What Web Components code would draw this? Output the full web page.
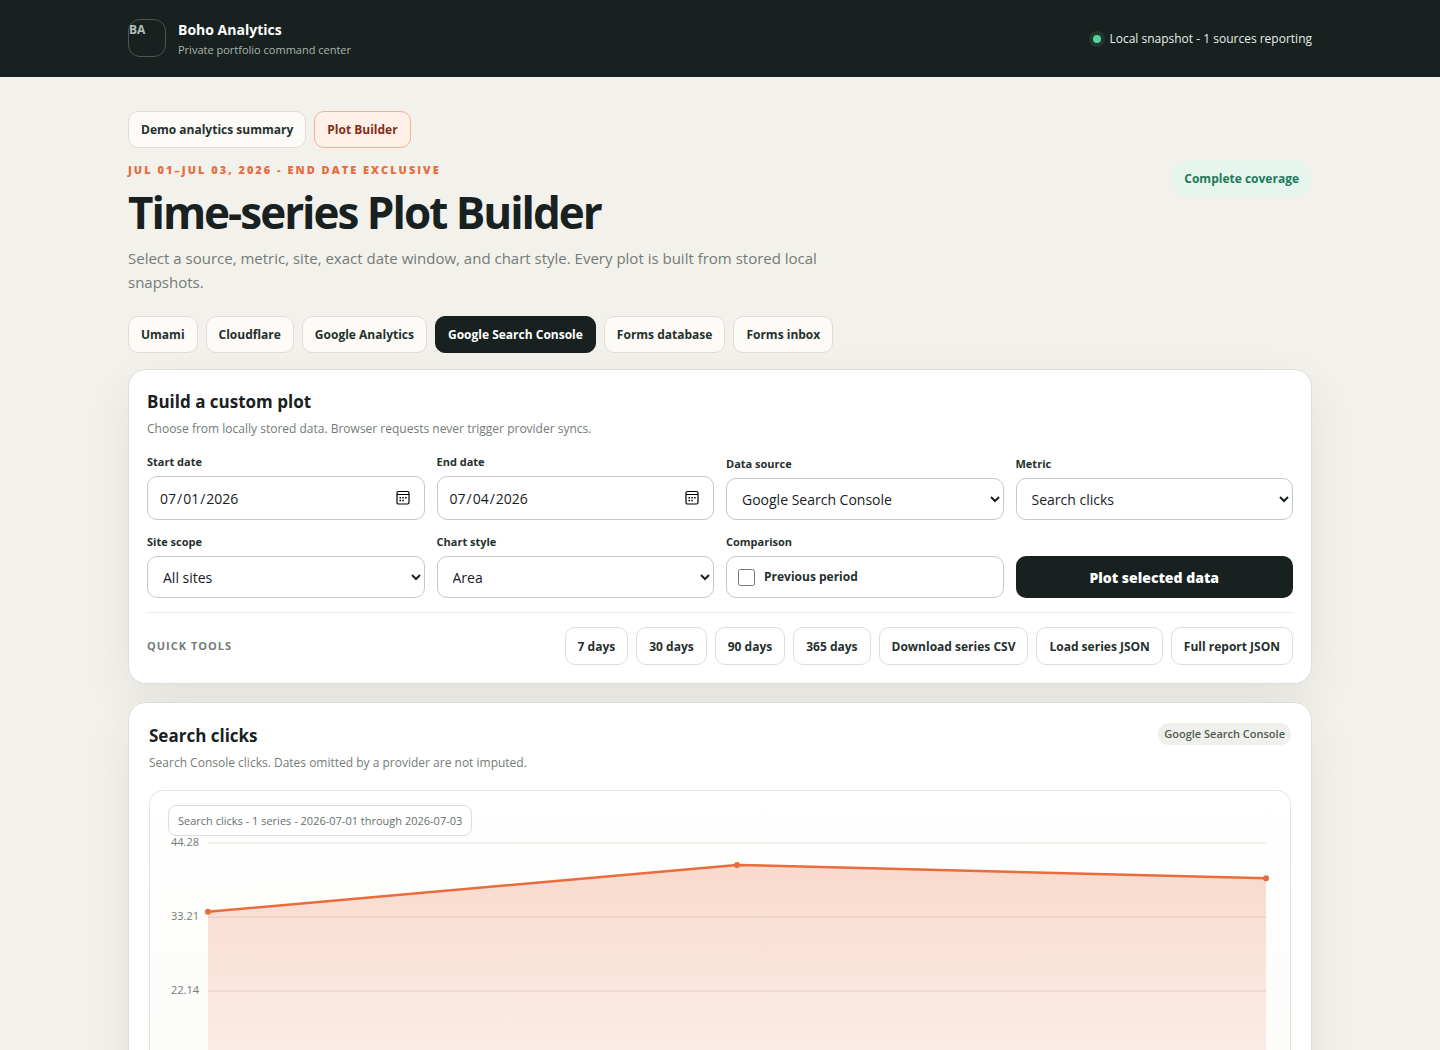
<!DOCTYPE html>
<html lang="en">
<head>
<meta charset="utf-8">
<meta name="viewport" content="width=device-width, initial-scale=1">
<title>Time-series Plot Builder</title>
<style>
:root {
  --ink: #18211f; --muted: #737b76; --line: #deded7; --paper: #f3f1ec; --accent: #e96c3c;
  --card: #ffffff; --soft: #fcfbf7;
}
* { box-sizing: border-box; }
body { margin: 0; background: var(--paper); color: var(--ink); font: 15px/24px "Open Sans", "Noto Sans", sans-serif; }
main { width: min(1184px, 100% - 40px); margin: 0 auto; padding: 34px 0 40px; display: flex; flex-direction: column; }
.crumbs, .tabs, .tools { display: flex; flex-wrap: wrap; gap: 8px; }
.crumbs { margin-bottom: 12px; }
.tabs { margin: 22px 0 16px; }
.stack { display: flex; flex-direction: column; gap: 18px; }
.form { display: grid; grid-template-columns: repeat(4, minmax(0, 1fr)); gap: 14px 12px; align-items: end; margin: 0; }
.foot { display: flex; align-items: center; justify-content: space-between; gap: 12px; margin-top: 14px; padding-top: 14px; border-top: 1px solid #eaeae4; }
.foot-title { font-size: 11px; line-height: 16px; font-weight: 700; letter-spacing: 1px; color: var(--muted); }
@media (max-width: 800px) { .form { grid-template-columns: repeat(2, minmax(0, 1fr)); } }
</style>
</head>
<body>
<app-header></app-header>
<main>
  <nav class="crumbs" aria-label="Pages">
    <pill-link>Demo analytics summary</pill-link>
    <pill-link kind="accent">Plot Builder</pill-link>
  </nav>
  <page-hero>
    <span slot="eyebrow">JUL 01–JUL 03, 2026 - END DATE EXCLUSIVE</span>
    <span slot="title">Time-series Plot Builder</span>
    <span slot="lead">Select a source, metric, site, exact date window, and chart style. Every plot is built from stored local snapshots.</span>
    <span slot="status">Complete coverage</span>
  </page-hero>
  <nav class="tabs" aria-label="Sources">
    <pill-link>Umami</pill-link>
    <pill-link>Cloudflare</pill-link>
    <pill-link>Google Analytics</pill-link>
    <pill-link kind="active">Google Search Console</pill-link>
    <pill-link>Forms database</pill-link>
    <pill-link>Forms inbox</pill-link>
  </nav>
  <div class="stack">
    <ui-panel>
      <span slot="title">Build a custom plot</span>
      <span slot="note">Choose from locally stored data. Browser requests never trigger provider syncs.</span>
      <div class="form">
        <date-field label="Start date" value="2026-07-01"></date-field>
        <date-field label="End date" value="2026-07-04"></date-field>
        <select-field label="Data source" value="Google Search Console"></select-field>
        <select-field label="Metric" value="Search clicks"></select-field>
        <select-field label="Site scope" value="All sites"></select-field>
        <select-field label="Chart style" value="Area"></select-field>
        <check-field label="Comparison">Previous period</check-field>
        <main-button>Plot selected data</main-button>
      </div>
      <div class="foot">
        <span class="foot-title">QUICK TOOLS</span>
        <div class="tools">
          <tool-button>7 days</tool-button>
          <tool-button>30 days</tool-button>
          <tool-button>90 days</tool-button>
          <tool-button>365 days</tool-button>
          <tool-button>Download series CSV</tool-button>
          <tool-button>Load series JSON</tool-button>
          <tool-button>Full report JSON</tool-button>
        </div>
      </div>
    </ui-panel>
    <ui-panel wide>
      <span slot="title">Search clicks</span>
      <span slot="note">Search Console clicks. Dates omitted by a provider are not imputed.</span>
      <span slot="badge">Google Search Console</span>
      <series-chart values="34,41,39" max="44.28">Search clicks - 1 series - 2026-07-01 through 2026-07-03</series-chart>
    </ui-panel>
  </div>
</main>
<script>
const base = '*{box-sizing:border-box} ';
function define(name, css, html, setup) {
  const tpl = document.createElement('template');
  customElements.define(name, class extends HTMLElement {
    connectedCallback() {
      if (this.shadowRoot) return;
      tpl.innerHTML = `<style>${base}${css}</style>${typeof html === 'function' ? html(this) : html}`;
      this.attachShadow({ mode: 'open' }).append(tpl.content.cloneNode(true));
      if (setup) setup(this);
    }
  });
}

define('app-header', `
  :host{display:block;background:var(--ink);color:#fff}
  header{width:min(1184px,100% - 40px);margin:0 auto;padding:19px 0 18px;display:flex;align-items:center;justify-content:space-between}
  .brand{display:flex;align-items:flex-start;gap:12px}
  .mark{width:38px;height:38px;border:1px solid #4d5553;border-radius:12px;font-size:12px;line-height:19px;font-weight:700;color:#b3bfb9}
  .name{display:flex;flex-direction:column}
  strong{font-size:14px;line-height:22px;font-weight:700}
  small{font-size:11px;line-height:18px;color:#a9b5b0}
  .state{display:flex;align-items:center;gap:8px;font-size:12px;line-height:20px;color:#e6eeea}
  i{width:8px;height:8px;border-radius:50%;background:#52d49c;box-shadow:0 0 0 4px rgba(82,212,156,.13)}`,
  `<header><div class="brand"><span class="mark">BA</span><span class="name"><strong>Boho Analytics</strong><small>Private portfolio command center</small></span></div>
  <div class="state"><i></i><span>Local snapshot - 1 sources reporting</span></div></header>`);

define('pill-link', `
  :host{display:block}
  a{display:block;padding:9px 12px 8px;border:1px solid var(--line);border-radius:10px;background:var(--soft);color:#25302d;font-size:12px;line-height:18px;font-weight:700;text-decoration:none;white-space:nowrap}
  :host([kind=accent]) a{background:#fff0e8;border-color:#f2b196;color:#81301a}
  :host([kind=active]) a{background:var(--ink);border-color:var(--ink);color:#fff}`,
  `<a href="#"><slot></slot></a>`);

define('page-hero', `
  :host{display:flex;justify-content:space-between;align-items:flex-start;gap:24px}
  .copy{max-width:720px}
  .eyebrow{font-size:11px;line-height:20px;font-weight:800;letter-spacing:2px;color:var(--accent)}
  h1{margin:8px 0 10px;font-size:44px;line-height:48px;font-weight:700;letter-spacing:-2px}
  p{margin:0;font-size:15px;line-height:24px;color:var(--muted)}
  .status{padding:9px 12px 8px;border:1px solid #e6f5ed;border-radius:99px;background:#e6f5ed;color:#1d795b;font-size:12px;line-height:18px;font-weight:700;white-space:nowrap}`,
  `<div class="copy"><div class="eyebrow"><slot name="eyebrow"></slot></div><h1><slot name="title"></slot></h1><p><slot name="lead"></slot></p></div><div class="status"><slot name="status"></slot></div>`);

define('ui-panel', `
  :host{display:block;padding:19px 18px 18px;border:1px solid var(--line);border-radius:18px;background:var(--card);box-shadow:0 18px 50px rgba(24,33,31,.07)}
  :host([wide]){padding:20px}
  header{display:flex;justify-content:space-between;align-items:flex-start;margin-bottom:16px}
  :host([wide]) header{margin-bottom:18px}
  h2{margin:0 0 5px;font-size:17px;line-height:26px;font-weight:700}
  p{margin:0;font-size:12px;line-height:18px;color:var(--muted)}
  ::slotted([slot=badge]){display:block;padding:2px 6px;border-radius:99px;background:#eff0eb;color:#4f5a54;font-size:11px;line-height:18px;font-weight:600}`,
  `<header><div><h2><slot name="title"></slot></h2><p><slot name="note"></slot></p></div><slot name="badge"></slot></header><slot></slot>`);

const field = `
  :host{display:flex;flex-direction:column;gap:6px;min-width:0}
  label,.label{font-size:11px;line-height:16px;font-weight:700;color:#25302d}
  input:not([type=checkbox]),select,.box{width:100%;border:1px solid #c6c9c4;border-radius:10px;background:#fff;color:var(--ink);font-family:inherit;font-size:14px}
`;
const calendar = `url("data:image/svg+xml,%3Csvg xmlns='http://www.w3.org/2000/svg' viewBox='0 0 16 16'%3E%3Crect x='2' y='1.5' width='12' height='12.5' rx='1.5' fill='none' stroke='black' stroke-width='1.2'/%3E%3Cpath d='M2 4.5h12' stroke='black' stroke-width='1.2'/%3E%3Cpath d='M7.3 7h1.5v1.5H7.3zM10.1 7h1.5v1.5h-1.5zM4.5 7H6v1.5H4.5zM4.5 9.8H6v1.5H4.5zM7.3 9.8h1.5v1.5H7.3z' fill='black'/%3E%3C/svg%3E")`;
define('date-field', field + `
  input:not([type=checkbox]){height:44px;padding:10px 11px}
  input::-webkit-calendar-picker-indicator{width:16px;height:16px;padding:2px;background:${calendar} center/16px 16px no-repeat}`,
  el => `<label for="c">${el.getAttribute('label')}</label><input id="c" type="date" value="${el.getAttribute('value')}">`);
define('select-field', field + `select{height:42px;padding:0 0 0 11px}`,
  el => `<label for="c">${el.getAttribute('label')}</label><select id="c"><option>${el.getAttribute('value')}</option></select>`);
define('check-field', field + `
  .box{display:flex;align-items:center;gap:9px;height:42px;padding:0 11px;font-size:12px;line-height:20px;font-weight:700;color:#25302d}
  input{width:17px;height:17px;margin:0}`,
  el => `<span class="label">${el.getAttribute('label')}</span><label class="box"><input type="checkbox"><slot></slot></label>`);

define('main-button', `
  :host{display:block}
  button{width:100%;height:42px;border:0;border-radius:10px;background:var(--ink);color:#fff;font-family:inherit;font-size:14px;font-weight:800}`,
  `<button type="button"><slot></slot></button>`);
define('tool-button', `
  :host{display:block}
  button{height:38px;padding:0 12px;border:1px solid var(--line);border-radius:10px;background:#fff;color:#25302d;font-family:inherit;font-size:12px;font-weight:700;white-space:nowrap}`,
  `<button type="button"><slot></slot></button>`);

define('series-chart', `
  :host{display:block;padding:14px 18px 18px;border:1px solid #e3e4df;border-radius:14px;background:linear-gradient(#fff,#fbfaf6)}
  .tag{display:flex;width:fit-content;padding:6px 9px;border:1px solid var(--line);border-radius:8px;background:#fff;color:#66706a;font-size:11px;line-height:17px}
  svg{display:block;width:100%;height:auto;overflow:visible}
  text{font-size:11px;fill:#737b76;text-anchor:end}`,
  `<div class="tag"><slot></slot></div><svg viewBox="0 0 1104 330"></svg>`,
  el => {
    const max = Number(el.getAttribute('max'));
    const values = el.getAttribute('values').split(',').map(Number);
    const left = 40, right = 1098, top = 7, bottom = 303;
    const pts = values.map((v, i) => [left + (right - left) * i / (values.length - 1), bottom - v / max * (bottom - top)]);
    const line = pts.map(p => p.join(',')).join(' L');
    let out = `<defs><linearGradient id="g" x1="0" y1="0" x2="0" y2="1"><stop offset="0" stop-color="#e96c3c" stop-opacity=".25"/><stop offset="1" stop-color="#e96c3c" stop-opacity=".04"/></linearGradient></defs>`;
    for (let i = 0; i <= 4; i++) {
      const y = top + (bottom - top) * i / 4;
      out += `<path d="M${left},${y}H${right}" stroke="#eff0eb" stroke-width="2"/>`;
      if (i < 3) out += `<text x="31" y="${y + 3}">${(max * (4 - i) / 4).toFixed(2)}</text>`;
    }
    out += `<path d="M${line} L${right},${bottom} L${left},${bottom}Z" fill="url(#g)"/>`;
    out += `<path d="M${line}" fill="none" stroke="#e96c3c" stroke-width="2.5" stroke-linejoin="round"/>`;
    out += pts.map(p => `<circle cx="${p[0]}" cy="${p[1]}" r="3" fill="#e96c3c"/>`).join('');
    el.shadowRoot.querySelector('svg').innerHTML = out;
  });
</script>
</body>
</html>
